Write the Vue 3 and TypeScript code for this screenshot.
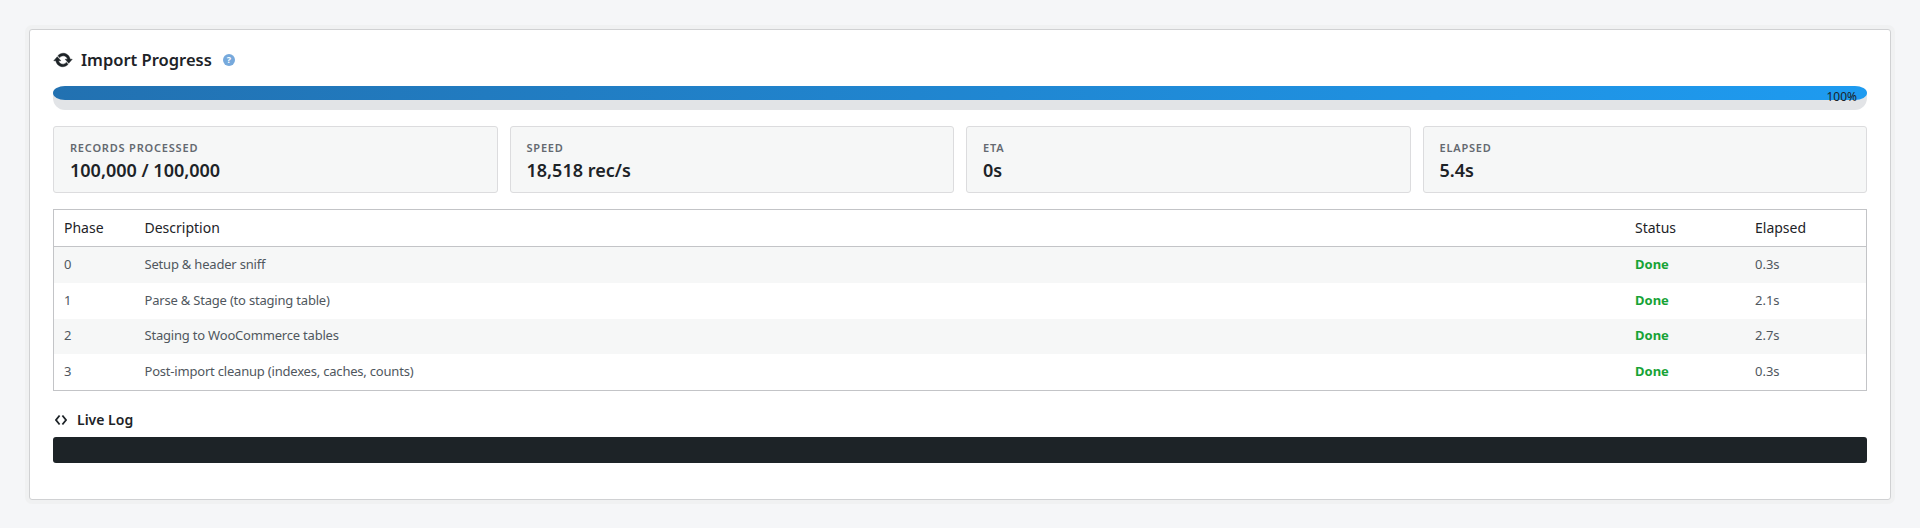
<script setup lang="ts">
interface Stat {
  label: string
  value: string
}

interface Phase {
  id: number
  description: string
  status: string
  elapsed: string
}

const stats: Stat[] = [
  { label: 'Records processed', value: '100,000 / 100,000' },
  { label: 'Speed', value: '18,518 rec/s' },
  { label: 'ETA', value: '0s' },
  { label: 'Elapsed', value: '5.4s' }
]

const phases: Phase[] = [
  { id: 0, description: 'Setup & header sniff', status: 'Done', elapsed: '0.3s' },
  { id: 1, description: 'Parse & Stage (to staging table)', status: 'Done', elapsed: '2.1s' },
  { id: 2, description: 'Staging to WooCommerce tables', status: 'Done', elapsed: '2.7s' },
  { id: 3, description: 'Post-import cleanup (indexes, caches, counts)', status: 'Done', elapsed: '0.3s' }
]
</script>

<template>
  <div class="page">
    <section class="card">
      <h2 class="title">
        <svg class="title-icon" viewBox="0 0 20 20" width="20" height="20">
          <path d="M10.2 3.28c3.53 0 6.43 2.61 6.92 6h2.08l-3.5 4-3.5-4h2.32c-.45-1.97-2.21-3.45-4.32-3.45-1.45 0-2.73.71-3.54 1.78L4.95 5.66C6.23 4.2 8.11 3.28 10.2 3.28zm-.4 13.44c-3.52 0-6.43-2.61-6.92-6H.8l3.5-4c1.17 1.33 2.33 2.67 3.5 4H5.48c.45 1.97 2.21 3.45 4.32 3.45 1.45 0 2.73-.71 3.54-1.78l1.71 1.95c-1.28 1.46-3.15 2.38-5.25 2.38z" fill="currentColor" stroke="currentColor" stroke-width="0.5" />
        </svg>
        <span>Import Progress</span>
        <span class="help">?</span>
      </h2>

      <div class="progress">
        <div class="progress-fill">
          <span class="progress-label">100%</span>
        </div>
      </div>

      <div class="stats">
        <div v-for="stat in stats" :key="stat.label" class="stat">
          <div class="stat-label">{{ stat.label }}</div>
          <div class="stat-value">{{ stat.value }}</div>
        </div>
      </div>

      <table class="phases">
        <thead>
          <tr>
            <th class="col-phase">Phase</th>
            <th>Description</th>
            <th class="col-status">Status</th>
            <th class="col-elapsed">Elapsed</th>
          </tr>
        </thead>
        <tbody>
          <tr v-for="phase in phases" :key="phase.id">
            <td>{{ phase.id }}</td>
            <td class="desc">{{ phase.description }}</td>
            <td class="done">{{ phase.status }}</td>
            <td>{{ phase.elapsed }}</td>
          </tr>
        </tbody>
      </table>

      <h3 class="log-title">
        <svg viewBox="0 0 12 12" width="12" height="12">
          <path d="M4.6 1.5 1 6l3.6 4.5M7.4 1.5 11 6l-3.6 4.5" fill="none" stroke="currentColor" stroke-width="1.8" />
        </svg>
        <span>Live Log</span>
      </h3>
      <div class="log"></div>
    </section>
  </div>
</template>

<style>
html,
body {
  background: #f5f6f8;
}
</style>

<style scoped>
.page {
  padding: 29px;
  font-family: "Noto Sans", "Open Sans", sans-serif;
  color: #1d2327;
}

.card {
  box-sizing: border-box;
  height: 471px;
  padding: 20px 23px;
  background: #fff;
  border: 1px solid #d0d1d3;
  border-radius: 3px;
  box-shadow: 0 0 0 4px #f0f1f2;
}

.title {
  display: flex;
  align-items: center;
  height: 20px;
  margin: 0 0 16px;
  font-size: 16.5px;
  font-weight: 600;
  line-height: 20px;
}

.title-icon {
  margin-right: 8px;
}

.help {
  width: 12px;
  height: 12px;
  margin-left: 11px;
  border-radius: 50%;
  background: #76a9dc;
  color: #fff;
  font-size: 9px;
  font-weight: 700;
  line-height: 12px;
  text-align: center;
}

.progress {
  height: 24px;
  border-radius: 12px;
  background: #e2e4e7;
}

.progress-fill {
  display: flex;
  justify-content: flex-end;
  height: 14px;
  padding-right: 10px;
  border-radius: 12px 12px 12px 12px / 7px;
  background: linear-gradient(90deg, #2271b1, #1e9bf0);
}

.progress-label {
  height: 14px;
  font-size: 12px;
  line-height: 22px;
}

.stats {
  display: grid;
  grid-template-columns: repeat(4, 1fr);
  gap: 12px;
  margin-top: 16px;
}

.stat {
  box-sizing: border-box;
  height: 67px;
  padding: 13px 16px;
  background: #f6f7f7;
  border: 1px solid #dcdcde;
  border-radius: 3px;
}

.stat-label {
  font-size: 11px;
  font-weight: 600;
  line-height: 16px;
  letter-spacing: 0.8px;
  text-transform: uppercase;
  color: #646970;
}

.stat-value {
  margin-top: 2px;
  font-size: 18px;
  font-weight: 600;
  line-height: 24px;
}

.phases {
  width: 100%;
  margin-top: 16px;
  border: 1px solid #c3c4c7;
  border-collapse: separate;
  border-spacing: 0;
  table-layout: fixed;
}

.phases th {
  box-sizing: border-box;
  height: 37px;
  padding: 0 10px 2px;
  border-bottom: 1px solid #c3c4c7;
  font-size: 14px;
  font-weight: 400;
  text-align: left;
}

.phases td {
  box-sizing: border-box;
  height: 35.75px;
  padding: 0 10px 2px;
  font-size: 13px;
  color: #50575e;
}

.phases td.desc {
  letter-spacing: -0.2px;
}

.phases tbody tr:nth-child(odd) td {
  background: #f6f7f7;
}

.col-phase {
  width: 80.5px;
}

.col-status {
  width: 120px;
}

.col-elapsed {
  width: 121px;
}

.phases td.done {
  color: #16a336;
  font-weight: 700;
}

.log-title {
  display: flex;
  align-items: center;
  gap: 10px;
  height: 20px;
  margin: 19px 0 7px;
  padding-left: 2px;
  font-size: 14px;
  font-weight: 600;
  line-height: 20px;
}

.log {
  height: 26px;
  border-radius: 3px;
  background: #1d2327;
}
</style>
